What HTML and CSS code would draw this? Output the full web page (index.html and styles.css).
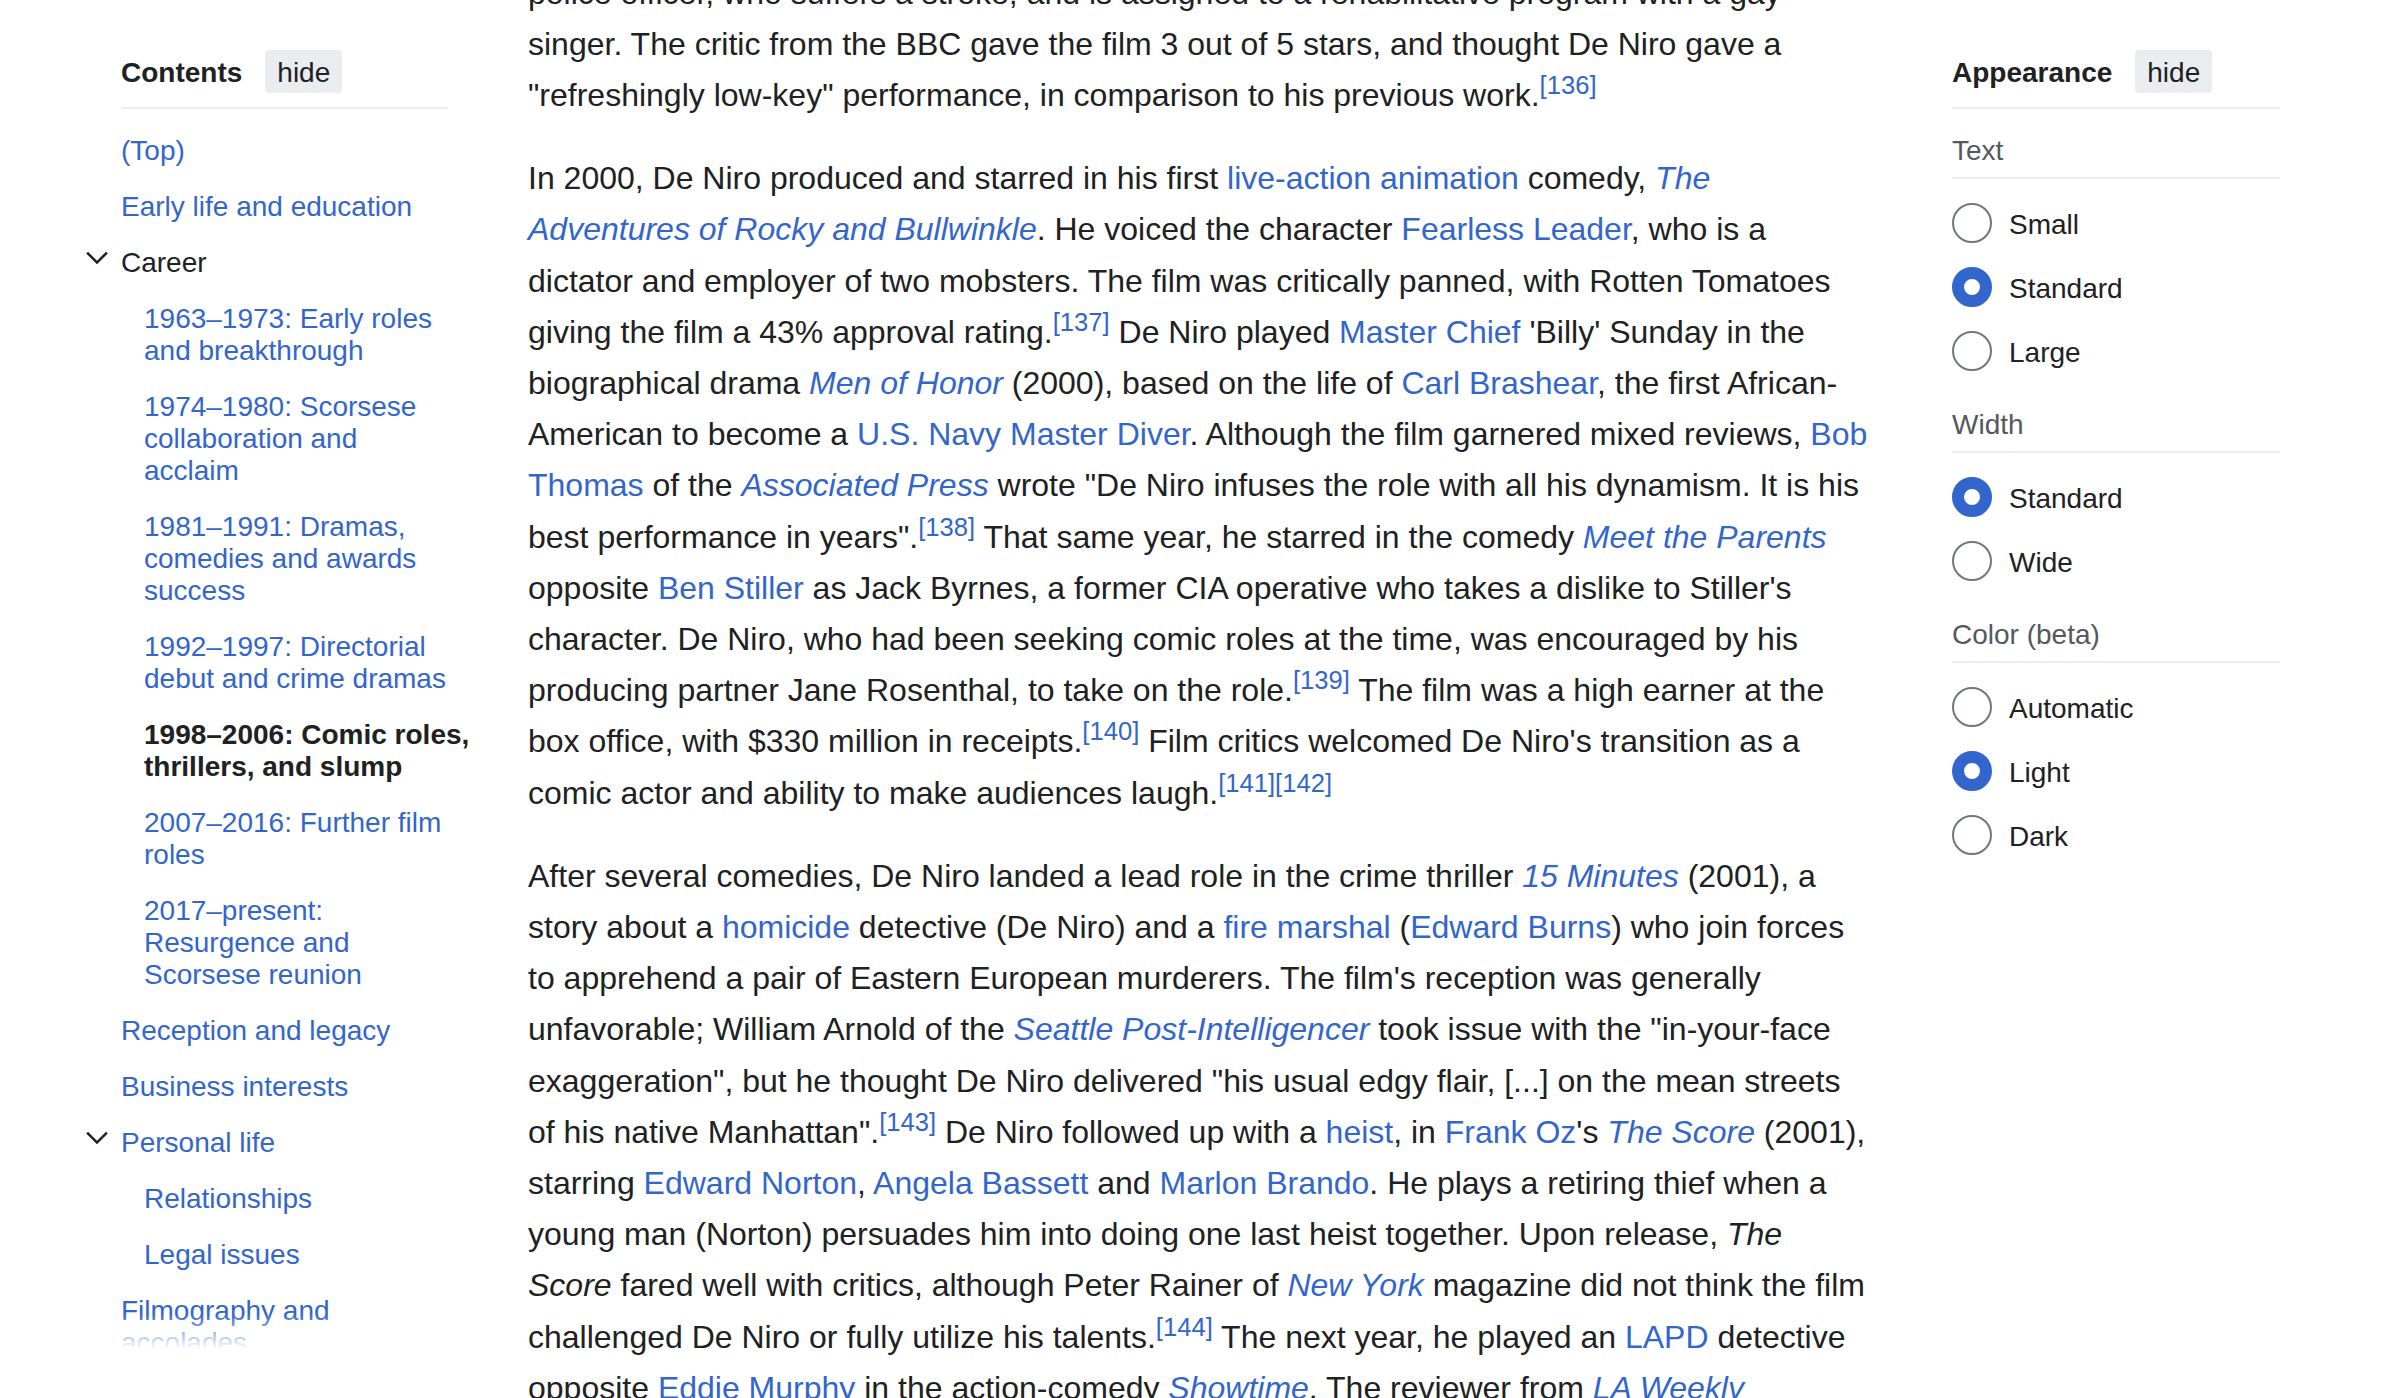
FILE: index.html
```html
<!DOCTYPE html>
<html lang="en">
<head>
<meta charset="utf-8">
<title>Robert De Niro</title>
<link rel="stylesheet" href="styles.css">
</head>
<body>
<div class="page">
  <nav class="toc">
    <div class="panel-head">
      <h2 class="panel-title">Contents</h2>
      <button class="hide-btn" type="button">hide</button>
    </div>
    <ul class="toc-list">
      <li><a class="toc-link" href="#">(Top)</a></li>
      <li><a class="toc-link" href="#">Early life and education</a></li>
      <li>
        <div class="toc-row">
          <svg class="toc-toggle" viewBox="0 0 20 20" aria-hidden="true"><path d="m17.5 4.75-7.5 7.5-7.5-7.5L1 6.25l9 9 9-9z"/></svg>
          <a class="toc-link toc-link--ancestor" href="#">Career</a>
        </div>
        <ul class="toc-sublist">
          <li><a class="toc-link" href="#">1963–1973: Early roles<br>and breakthrough</a></li>
          <li><a class="toc-link" href="#">1974–1980: Scorsese<br>collaboration and<br>acclaim</a></li>
          <li><a class="toc-link" href="#">1981–1991: Dramas,<br>comedies and awards<br>success</a></li>
          <li><a class="toc-link" href="#">1992–1997: Directorial<br>debut and crime dramas</a></li>
          <li><a class="toc-link toc-link--active" href="#">1998–2006: Comic roles,<br>thrillers, and slump</a></li>
          <li><a class="toc-link" href="#">2007–2016: Further film<br>roles</a></li>
          <li><a class="toc-link" href="#">2017–present:<br>Resurgence and<br>Scorsese reunion</a></li>
        </ul>
      </li>
      <li><a class="toc-link" href="#">Reception and legacy</a></li>
      <li><a class="toc-link" href="#">Business interests</a></li>
      <li>
        <div class="toc-row">
          <svg class="toc-toggle" viewBox="0 0 20 20" aria-hidden="true"><path d="m17.5 4.75-7.5 7.5-7.5-7.5L1 6.25l9 9 9-9z"/></svg>
          <a class="toc-link" href="#">Personal life</a>
        </div>
        <ul class="toc-sublist">
          <li><a class="toc-link" href="#">Relationships</a></li>
          <li><a class="toc-link" href="#">Legal issues</a></li>
        </ul>
      </li>
      <li><a class="toc-link" href="#">Filmography and<br>accolades</a></li>
      <li><a class="toc-link" href="#">References</a></li>
    </ul>
  </nav>

  <main class="content">
    <p>police officer, who suffers a stroke, and is assigned to a rehabilitative program with a gay<br>singer. The critic from the BBC gave the film 3 out of 5 stars, and thought De Niro gave a<br>"refreshingly low-key" performance, in comparison to his previous work.<sup class="ref"><a href="#">[136]</a></sup></p>

    <p>In 2000, De Niro produced and starred in his first <a href="#">live-action animation</a> comedy, <a href="#"><i>The<br>Adventures of Rocky and Bullwinkle</i></a>. He voiced the character <a href="#">Fearless Leader</a>, who is a<br>dictator and employer of two mobsters. The film was critically panned, with Rotten Tomatoes<br>giving the film a 43% approval rating.<sup class="ref"><a href="#">[137]</a></sup> De Niro played <a href="#">Master Chief</a> 'Billy' Sunday in the<br>biographical drama <a href="#"><i>Men of Honor</i></a> (2000), based on the life of <a href="#">Carl Brashear</a>, the first African-<br>American to become a <a href="#">U.S. Navy Master Diver</a>. Although the film garnered mixed reviews, <a href="#">Bob<br>Thomas</a> of the <a href="#"><i>Associated Press</i></a> wrote "De Niro infuses the role with all his dynamism. It is his<br>best performance in years".<sup class="ref"><a href="#">[138]</a></sup> That same year, he starred in the comedy <a href="#"><i>Meet the Parents</i></a><br>opposite <a href="#">Ben Stiller</a> as Jack Byrnes, a former CIA operative who takes a dislike to Stiller's<br>character. De Niro, who had been seeking comic roles at the time, was encouraged by his<br>producing partner Jane Rosenthal, to take on the role.<sup class="ref"><a href="#">[139]</a></sup> The film was a high earner at the<br>box office, with $330 million in receipts.<sup class="ref"><a href="#">[140]</a></sup> Film critics welcomed De Niro's transition as a<br>comic actor and ability to make audiences laugh.<sup class="ref"><a href="#">[141]</a></sup><sup class="ref"><a href="#">[142]</a></sup></p>

    <p>After several comedies, De Niro landed a lead role in the crime thriller <a href="#"><i>15 Minutes</i></a> (2001), a<br>story about a <a href="#">homicide</a> detective (De Niro) and a <a href="#">fire marshal</a> (<a href="#">Edward Burns</a>) who join forces<br>to apprehend a pair of Eastern European murderers. The film's reception was generally<br>unfavorable; William Arnold of the <a href="#"><i>Seattle Post-Intelligencer</i></a> took issue with the "in-your-face<br>exaggeration", but he thought De Niro delivered "his usual edgy flair, [...] on the mean streets<br>of his native Manhattan".<sup class="ref"><a href="#">[143]</a></sup> De Niro followed up with a <a href="#">heist</a>, in <a href="#">Frank Oz</a>'s <a href="#"><i>The Score</i></a> (2001),<br>starring <a href="#">Edward Norton</a>, <a href="#">Angela Bassett</a> and <a href="#">Marlon Brando</a>. He plays a retiring thief when a<br>young man (Norton) persuades him into doing one last heist together. Upon release, <i>The<br>Score</i> fared well with critics, although Peter Rainer of <a href="#"><i>New York</i></a> magazine did not think the film<br>challenged De Niro or fully utilize his talents.<sup class="ref"><a href="#">[144]</a></sup> The next year, he played an <a href="#">LAPD</a> detective<br>opposite <a href="#">Eddie Murphy</a> in the action-comedy <a href="#"><i>Showtime</i></a>. The reviewer from <a href="#"><i>LA Weekly</i></a></p>
  </main>

  <aside class="appearance">
    <div class="panel-head">
      <h2 class="panel-title">Appearance</h2>
      <button class="hide-btn" type="button">hide</button>
    </div>
    <div class="app-body">
      <div class="app-group">
        <div class="app-label">Text</div>
        <div class="radio-list">
          <div class="radio-row"><span class="radio"></span><span class="radio-text">Small</span></div>
          <div class="radio-row"><span class="radio radio--checked"></span><span class="radio-text">Standard</span></div>
          <div class="radio-row"><span class="radio"></span><span class="radio-text">Large</span></div>
        </div>
      </div>
      <div class="app-group">
        <div class="app-label">Width</div>
        <div class="radio-list">
          <div class="radio-row"><span class="radio radio--checked"></span><span class="radio-text">Standard</span></div>
          <div class="radio-row"><span class="radio"></span><span class="radio-text">Wide</span></div>
        </div>
      </div>
      <div class="app-group">
        <div class="app-label">Color (beta)</div>
        <div class="radio-list">
          <div class="radio-row"><span class="radio"></span><span class="radio-text">Automatic</span></div>
          <div class="radio-row"><span class="radio radio--checked"></span><span class="radio-text">Light</span></div>
          <div class="radio-row"><span class="radio"></span><span class="radio-text">Dark</span></div>
        </div>
      </div>
    </div>
  </aside>
</div>
</body>
</html>
```

FILE: styles.css
```css
html, body {
  margin: 0;
  padding: 0;
  height: 100%;
  overflow: hidden;
  background: #ffffff;
}

body {
  font-family: "Liberation Sans", Arial, Helvetica, sans-serif;
  color: #202122;
}

a {
  color: #3366cc;
  text-decoration: none;
}

.page {
  display: flex;
  align-items: flex-start;
  padding-left: 85px;
}

/* ---------- shared panel header ---------- */
.panel-head {
  display: flex;
  align-items: center;
  gap: 23px;
  padding-bottom: 14px;
  border-bottom: 2px solid #eaecf0;
}

.panel-title {
  margin: 0;
  padding-top: 3px;
  font-size: 28px;
  line-height: 32px;
  font-weight: bold;
  color: #202122;
}

.hide-btn {
  display: inline-flex;
  align-items: center;
  box-sizing: border-box;
  height: 43px;
  padding: 3px 12px 0;
  border: 0;
  border-radius: 4px;
  background: #eaecf0;
  color: #202122;
  font-family: inherit;
  font-size: 28px;
  line-height: 32px;
}

/* ---------- table of contents ---------- */
.toc {
  flex: none;
  position: relative;
  box-sizing: border-box;
  width: 405px;
  height: 1352px;
  padding: 50px 0 0 36px;
  overflow: hidden;
}

.toc::after {
  content: "";
  position: absolute;
  left: 0;
  right: 0;
  bottom: 0;
  height: 38px;
  background: linear-gradient(rgba(255, 255, 255, 0), #ffffff 92%);
}

.toc .panel-head {
  width: 327px;
}

.toc-list {
  list-style: none;
  margin: 12px 0 0;
  padding: 0;
}

.toc-sublist {
  list-style: none;
  margin: 0;
  padding: 0 0 0 23px;
}

.toc-link {
  display: block;
  padding: 13.5px 0 10.5px;
  font-size: 28px;
  line-height: 32px;
  color: #3366cc;
}

.toc-link--ancestor {
  color: #202122;
}

.toc-link--active {
  color: #202122;
  font-weight: bold;
}

.toc-row {
  display: flex;
  align-items: flex-start;
}

.toc-toggle {
  flex: none;
  width: 24px;
  height: 24px;
  margin: 13px 12px 0 -36px;
  fill: #202122;
}

/* ---------- article ---------- */
.content {
  flex: none;
  width: 1352px;
  margin-left: 38px;
  margin-top: -32.4px;
}

.content p {
  margin: 0 0 32px;
  font-size: 32px;
  line-height: 51.2px;
  white-space: nowrap;
}

.ref {
  font-size: 80%;
  line-height: 1;
  vertical-align: super;
}

/* ---------- appearance ---------- */
.appearance {
  flex: none;
  width: 328px;
  margin-left: 72px;
  padding-top: 50px;
}

.app-body {
  display: flex;
  flex-direction: column;
  gap: 36px;
  padding-top: 24px;
}

.app-label {
  font-size: 28px;
  line-height: 32px;
  color: #54595d;
  padding: 1.5px 0 10.5px;
  border-bottom: 2px solid #eaecf0;
}

.radio-list {
  display: flex;
  flex-direction: column;
  gap: 24px;
  margin-top: 24px;
}

.radio-row {
  display: flex;
  align-items: center;
  gap: 17px;
  height: 40px;
}

.radio {
  flex: none;
  box-sizing: border-box;
  width: 40px;
  height: 40px;
  border: 2px solid #72777d;
  border-radius: 50%;
  background: #ffffff;
}

.radio--checked {
  border: 12px solid #3366cc;
}

.radio-text {
  padding-top: 3px;
  font-size: 28px;
  line-height: 32px;
  color: #202122;
}
```
